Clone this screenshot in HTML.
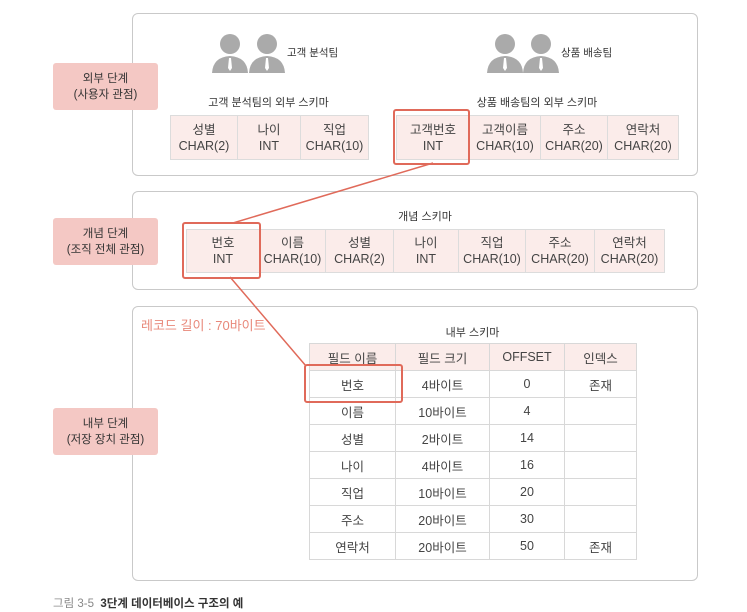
<!DOCTYPE html>
<html><head><meta charset="utf-8"><style>
body{margin:0;width:747px;height:612px;background:#fff;position:relative;overflow:hidden;font-family:"Liberation Sans","Noto Sans CJK KR",sans-serif;color:#333}
.a{position:absolute}
.box{position:absolute;border:1.5px solid #c9c9c9;border-radius:6px;background:#fff}
.lab{position:absolute;left:53px;width:105px;height:47px;background:#f4c8c4;border-radius:3px;font-size:11.5px;line-height:16px;text-align:center;display:flex;flex-direction:column;justify-content:center;color:#333}
.t{position:absolute;display:flex;border:1px solid #dcdcdc;background:#fbecea}
.t div{border-right:1px solid #dcdcdc;font-size:12.5px;line-height:16px;text-align:center;display:flex;flex-direction:column;justify-content:center;color:#444}
.t div:last-child{border-right:none}
.cap{position:absolute;font-size:11px;text-align:center;color:#333}
.rb{position:absolute;border:2px solid #e06a5a;border-radius:3px}
table{position:absolute;border-collapse:collapse;font-size:12.5px;color:#444}
td{border:1px solid #d8d8d8;text-align:center;height:26px;padding:0}
tr:first-child td{background:#fbecea}
</style></head><body>
<div class="box" style="left:132px;top:13px;width:564px;height:161px"></div>
<div class="box" style="left:132px;top:191px;width:564px;height:97px"></div>
<div class="box" style="left:132px;top:306px;width:564px;height:273px"></div>

<div class="lab" style="top:63px">외부 단계<br>(사용자 관점)</div>
<div class="lab" style="top:218px">개념 단계<br>(조직 전체 관점)</div>
<div class="lab" style="top:408px">내부 단계<br>(저장 장치 관점)</div>

<svg class="a" style="left:0;top:0" width="747" height="612">
<g fill="#aaa">
<circle cx="230" cy="44" r="10"/><path d="M212 73 Q213 57 230 56 Q247 57 248 73Z"/>
<circle cx="267" cy="44" r="10"/><path d="M249 73 Q250 57 267 56 Q284 57 285 73Z"/>
<circle cx="505" cy="44" r="10"/><path d="M487 73 Q488 57 505 56 Q522 57 523 73Z"/>
<circle cx="541" cy="44" r="10"/><path d="M523 73 Q524 57 541 56 Q558 57 559 73Z"/>
</g>
<g fill="#fff"><path d="M229 58h2l1 10-2 3-2-3z"/><path d="M266 58h2l1 10-2 3-2-3z"/><path d="M504 58h2l1 10-2 3-2-3z"/><path d="M540 58h2l1 10-2 3-2-3z"/></g>
<line x1="433" y1="163" x2="233" y2="223" stroke="#e06a5a" stroke-width="1.5"/>
<line x1="230" y1="277" x2="306" y2="366" stroke="#e06a5a" stroke-width="1.5"/>
</svg>

<div class="a" style="left:287px;top:45px;font-size:10.5px">고객 분석팀</div>
<div class="a" style="left:561px;top:45px;font-size:10.5px">상품 배송팀</div>
<div class="cap" style="left:170px;width:197px;top:94px">고객 분석팀의 외부 스키마</div>
<div class="cap" style="left:396px;width:282px;top:94px">상품 배송팀의 외부 스키마</div>

<div class="t" style="left:170px;top:115px;height:43px">
<div style="width:66px">성별<br>CHAR(2)</div><div style="width:62px">나이<br>INT</div><div style="width:67px">직업<br>CHAR(10)</div></div>
<div class="t" style="left:396px;top:115px;height:43px">
<div style="width:72px">고객번호<br>INT</div><div style="width:70px">고객이름<br>CHAR(10)</div><div style="width:66px">주소<br>CHAR(20)</div><div style="width:70px">연락처<br>CHAR(20)</div></div>
<div class="rb" style="left:393px;top:109px;width:73px;height:52px"></div>

<div class="cap" style="left:186px;width:478px;top:208px">개념 스키마</div>
<div class="t" style="left:186px;top:229px;height:42px">
<div style="width:72px">번호<br>INT</div><div style="width:65px">이름<br>CHAR(10)</div><div style="width:67px">성별<br>CHAR(2)</div><div style="width:64px">나이<br>INT</div><div style="width:66px">직업<br>CHAR(10)</div><div style="width:68px">주소<br>CHAR(20)</div><div style="width:69px">연락처<br>CHAR(20)</div></div>
<div class="rb" style="left:182px;top:222px;width:75px;height:53px"></div>

<div class="a" style="left:141px;top:315px;font-size:13px;color:#e8887a">레코드 길이 : 70바이트</div>
<div class="cap" style="left:309px;width:327px;top:324px">내부 스키마</div>
<table style="left:309px;top:343px;width:328px">
<tr><td style="width:85px">필드 이름</td><td style="width:93px">필드 크기</td><td style="width:74px">OFFSET</td><td>인덱스</td></tr>
<tr><td>번호</td><td>4바이트</td><td>0</td><td>존재</td></tr>
<tr><td>이름</td><td>10바이트</td><td>4</td><td></td></tr>
<tr><td>성별</td><td>2바이트</td><td>14</td><td></td></tr>
<tr><td>나이</td><td>4바이트</td><td>16</td><td></td></tr>
<tr><td>직업</td><td>10바이트</td><td>20</td><td></td></tr>
<tr><td>주소</td><td>20바이트</td><td>30</td><td></td></tr>
<tr><td>연락처</td><td>20바이트</td><td>50</td><td>존재</td></tr>
</table>
<div class="rb" style="left:304px;top:364px;width:95px;height:35px"></div>

<div class="a" style="left:53px;top:595px;font-size:11.5px"><span style="color:#888">그림 3-5</span>&nbsp; <b style="color:#333">3단계 데이터베이스 구조의 예</b></div>
</body></html>
